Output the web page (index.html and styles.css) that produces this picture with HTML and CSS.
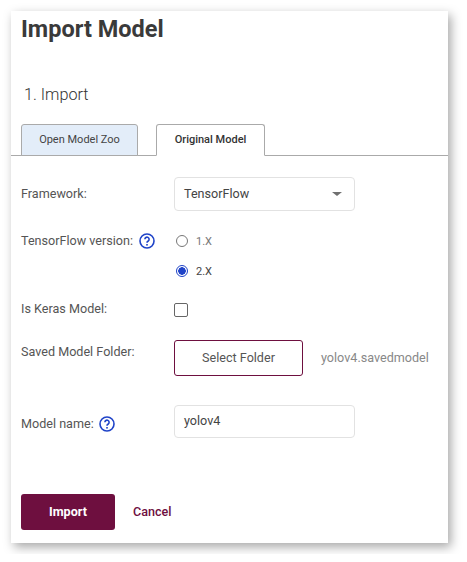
FILE: index.html
```html
<!DOCTYPE html>
<html lang="en">
<head>
  <meta charset="UTF-8">
  <title>Import Model</title>
  <link rel="stylesheet" href="styles.css">
</head>
<body>

  <main class="card">
    <h1>Import Model</h1>
    <h2>1. Import</h2>

    <div class="tabs">
      <div class="tab">Open Model Zoo</div>
      <div class="tab active">Original Model</div>
    </div>

    <div class="form">
      <div class="row row-framework">
        <div class="label">Framework:</div>
        <div class="select">
          <span>TensorFlow</span>
          <span class="caret"></span>
        </div>
      </div>

      <div class="row row-version">
        <div class="label">TensorFlow version:
          <svg class="help" viewBox="0 0 16 16" width="16" height="16">
            <circle cx="8" cy="8" r="7" fill="none" stroke="#1f43c8" stroke-width="1.6"/>
            <path d="M5.9 6.3a2.1 2.1 0 1 1 3.3 1.7c-.8.5-1.2 1-1.2 1.8" fill="none" stroke="#1f43c8" stroke-width="1.6"/>
            <rect x="7.2" y="11" width="1.6" height="1.6" fill="#1f43c8"/>
          </svg>
        </div>
        <div class="radios">
          <div class="radio-item"><span class="radio"></span>1.X</div>
          <div class="radio-item on"><span class="radio"></span>2.X</div>
        </div>
      </div>

      <div class="row row-keras">
        <div class="label">Is Keras Model:</div>
        <span class="checkbox"></span>
      </div>

      <div class="row row-folder">
        <div class="label">Saved Model Folder:</div>
        <button class="btn-outline">Select Folder</button>
        <span class="file-name">yolov4.savedmodel</span>
      </div>

      <div class="row row-name">
        <div class="label">Model name:
          <svg class="help" viewBox="0 0 16 16" width="16" height="16">
            <circle cx="8" cy="8" r="7" fill="none" stroke="#1f43c8" stroke-width="1.6"/>
            <path d="M5.9 6.3a2.1 2.1 0 1 1 3.3 1.7c-.8.5-1.2 1-1.2 1.8" fill="none" stroke="#1f43c8" stroke-width="1.6"/>
            <rect x="7.2" y="11" width="1.6" height="1.6" fill="#1f43c8"/>
          </svg>
        </div>
        <div class="input">yolov4</div>
      </div>
    </div>

    <div class="actions">
      <button class="btn-primary">Import</button>
      <button class="btn-link">Cancel</button>
    </div>
  </main>

</body>
</html>
```

FILE: styles.css
```css
* {
  box-sizing: border-box;
}

body {
  margin: 0;
  padding: 11px;
  background: white;
  font-family: Roboto, sans-serif;
  font-size: 12.6px;
  color: #555;
}

.card {
  width: 437px;
  height: 532px;
  background: white;
  box-shadow: 3px 4px 10px rgba(0,0,0,0.35);
}

h1 {
  margin: 0;
  padding: 3px 0 0 10px;
  height: 67px;
  font-size: 23.5px;
  line-height: 30px;
  font-weight: 700;
  color: #3a3a3a;
}

h2 {
  margin: 0;
  padding-left: 13px;
  height: 46px;
  font-size: 16.2px;
  line-height: 34px;
  font-weight: 300;
  color: #333;
}

.tabs {
  display: flex;
  gap: 18px;
  height: 32px;
  padding-left: 10px;
  border-bottom: 1px solid #aaa;
  font-size: 11px;
}

.tab {
  width: 117px;
  height: 32px;
  line-height: 30px;
  text-align: center;
  background: #e3edf9;
  color: #444;
  border: 1px solid #aaa;
  border-radius: 3px 3px 0 0;
}

.tab.active {
  width: 109px;
  background: white;
  border-bottom-color: white;
  color: #333;
  font-weight: 500;
}

.form {
  padding: 21px 0 0 10px;
}

.row {
  display: flex;
  align-items: flex-start;
}

.label {
  width: 153px;
  flex-shrink: 0;
  display: flex;
  align-items: center;
  line-height: 16px;
}

.help {
  margin-left: 6px;
}

.row-name .help {
  margin-left: 5px;
}

.row-framework {
  height: 56px;
}

.row-framework .label {
  padding-top: 9px;
}

.select, .input {
  width: 181px;
  height: 34px;
  padding: 0 9px;
  border: 1px solid #e2e2e2;
  border-radius: 4px;
  color: #444;
  line-height: 32px;
}

.select {
  display: flex;
  justify-content: space-between;
  align-items: center;
  padding-right: 12px;
}

.caret {
  width: 0;
  height: 0;
  border-left: 5px solid transparent;
  border-right: 5px solid transparent;
  border-top: 4px solid #707070;
}

.row-version {
  height: 70px;
}

.radios {
  display: flex;
  flex-direction: column;
  gap: 14px;
}

.radio-item {
  display: flex;
  align-items: center;
  height: 16px;
  padding-left: 2px;
  gap: 8px;
  font-size: 11px;
  color: #777;
}

.radio-item.on {
  color: #444;
}

.radio {
  width: 12px;
  height: 12px;
  border: 1px solid #777;
  border-radius: 50%;
  background: white;
}

.radio-item.on .radio {
  border-color: #1f43c8;
  background: radial-gradient(circle, #1f43c8 0 3.5px, white 4px);
}

.row-keras {
  height: 37px;
}

.row-keras .label {
  margin-top: -2px;
}

.checkbox {
  width: 14px;
  height: 14px;
  border: 1px solid #666;
  border-radius: 2px;
}

.row-folder {
  height: 65px;
}

.btn-outline {
  width: 129px;
  height: 36px;
  padding: 0 0 1px;
  background: white;
  border: 1px solid #6e0f3f;
  border-radius: 3px;
  font-family: inherit;
  font-size: 12.6px;
  color: #555;
}

.file-name {
  margin-left: 18px;
  line-height: 36px;
  color: #888;
}

.row-folder .label {
  padding-top: 4px;
}

.row-name .label {
  padding-top: 11px;
}

.input {
  height: 33px;
  line-height: 29px;
}

.actions {
  display: flex;
  align-items: center;
  gap: 18px;
  margin-top: 56px;
  padding-left: 10px;
}

.btn-primary {
  width: 94px;
  height: 36px;
  padding: 0 0 1px;
  background: #6e0f3f;
  color: white;
  border: none;
  border-radius: 3px;
  font-family: inherit;
  font-size: 12.6px;
  font-weight: 700;
}

.btn-link {
  padding: 0 0 2px;
  background: none;
  border: none;
  font-family: inherit;
  font-size: 12.6px;
  font-weight: 500;
  color: #6e0f3f;
}
```
